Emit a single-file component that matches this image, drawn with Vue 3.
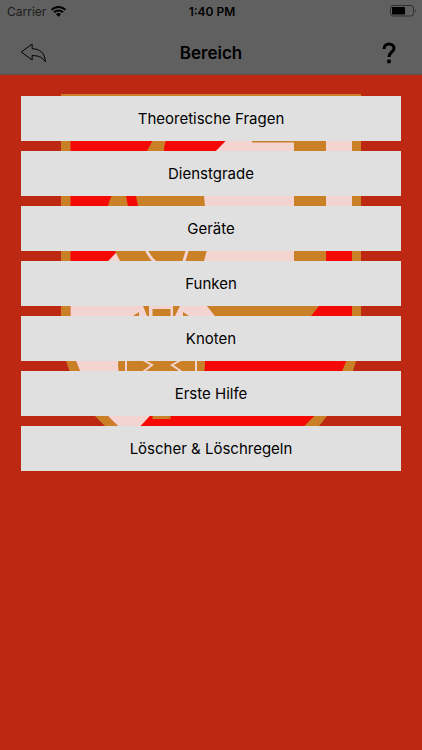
<template>
  <div class="screen">
    <header class="top">
      <div class="status-bar">
        <div class="carrier">
          <span>Carrier</span>
          <svg class="wifi" viewBox="0 0 15 11" aria-hidden="true">
            <path d="M0.6 3.8 A9.8 9.8 0 0 1 14.4 3.8" />
            <path d="M3 6.3 A6.4 6.4 0 0 1 12 6.3" />
            <path class="dot" d="M7.5 10.8 L5 8.2 A3.6 3.6 0 0 1 10 8.2 Z" />
          </svg>
        </div>
        <span class="time">1:40 PM</span>
        <svg class="battery" viewBox="0 0 27 12" aria-hidden="true">
          <rect class="shell" x="0.5" y="0.5" width="23" height="10.5" rx="2.5" />
          <rect x="2" y="2" width="13" height="7.5" rx="0.8" />
          <path class="tip" d="M25 3.8 Q26.6 5.8 25 7.8 Z" />
        </svg>
      </div>
      <nav class="nav-bar">
        <button class="nav-btn" type="button" aria-label="Zurück">
          <svg class="back-icon" viewBox="0 0 26 20" aria-hidden="true">
            <path d="M0.8 9 L11.6 1 V5.8 C19 5.6 24.6 10 24.8 18.8 C22 14.4 18 12.4 11.6 12.6 V17 Z" />
          </svg>
        </button>
        <h1 class="title">Bereich</h1>
        <button class="nav-btn right" type="button" aria-label="Hilfe">
          <svg class="help-icon" viewBox="0 0 14 22" aria-hidden="true">
            <path d="M2 7 C2 3.6 4 2 7 2 C10 2 12 3.8 12 6.3 C12 9.8 7 10 7 15" />
            <rect x="5.2" y="17.6" width="3.6" height="3.6" rx="0.8" />
          </svg>
        </button>
      </nav>
    </header>

    <main class="content">
      <!-- Wappen im Hintergrund -->
      <svg class="crest" viewBox="61 94 300 360" aria-hidden="true">
        <defs>
          <clipPath id="shield">
            <path d="M70.500 104 H352 V325 Q352 345 346 361 L342 371 Q334 395 314 416 L304 426 Q290 438 272 446 H150 Q132 438 118 426 L108 416 Q88 395 80 371 L76 361 Q70.500 345 70.500 325 Z" />
          </clipPath>
        </defs>
        <path class="gold" d="M61 94 H361 V325 Q361 345 356 361 L353 371 Q344 397 327 416 L319 426 Q302 442 275 454 H147 Q120 442 105 426 L95 416 Q78 397 69.500 371 L66 361 Q61 345 61 325 Z" />
        <g clip-path="url(#shield)">
          <rect class="red" x="61" y="94" width="300" height="360" />
          <path class="pink" d="M262 104 H352 V224 L150 416 L118 450 H61 V309 Z" />
          <path class="red" d="M352 224 V454 H115 L150 416 L205 361 L319 250 Z" />
          <rect class="gold" x="294" y="141" width="32" height="120" />
          <rect class="gold" x="252" y="139" width="44" height="3.500" />
          <path class="gold" d="M207 306 L215 316 H311 L319 306 L326 296 V261 H294 V290 H200 Z" />
          <!-- Helm -->
          <path class="gold" d="M158 132 Q152 141 147 151 Q112 186 108 206 Q108 238 115 251 L120 261 L137 282 H188 L204 261 L207 250 Q210 230 205 206 L204 196 L190 160 L164 151 Q164 145 166 141 L170 132 Z" />
          <path class="red" d="M166 141 L164 151 L170 168 L204 190 L215 151 L225 141 Z" />
          <path class="red" d="M126 196 H136 L138 206 L139 218 H130 L128 206 Z" />
          <path class="line thick" d="M146 249 Q149 257 156 263" />
          <path class="line thick" d="M188 248 L183 264" />
          <!-- Zahnrad und Beile -->
          <circle class="gold" cx="161.500" cy="365" r="43.500" />
          <path class="pink" d="M100 300 H202 L215 316 L192 332 H132 L117 348 H100 Z" />
          <path class="gold" d="M207 306 L215 316 H230 V306 Z" />
          <path class="gold" d="M143 306 H149 V316 H147 Z M173 306 H180 L175 316 H173 Z M133 316 L139 312 V316 Z M183 316 V312 L189 316 Z" />
          <rect class="gold" x="152.500" y="309" width="18" height="110" />
          <path class="line" d="M126 358 V374 M196 358 V374 M143 360 L152 365 L143 372 M181 360 L172 365 L182 372" />
        </g>
      </svg>

      <ul class="menu">
        <li v-for="item in items" :key="item">
          <button class="menu-btn" type="button">{{ item }}</button>
        </li>
      </ul>
    </main>
  </div>
</template>

<script setup>
const items = [
  'Theoretische Fragen',
  'Dienstgrade',
  'Geräte',
  'Funken',
  'Knoten',
  'Erste Hilfe',
  'Löscher & Löschregeln'
]
</script>

<style>
body {
  margin: 0;
  background-color: #bd2813;
}
</style>

<style scoped>
.screen {
  min-height: 100vh;
  background-color: #bd2813;
  color: #000;
  font-family: Inter, "Liberation Sans", sans-serif;
}

.top {
  display: flex;
  flex-direction: column;
  gap: 10px;
  background-color: #606060;
  border-bottom: 1px solid #6a5049;
}

.status-bar {
  display: grid;
  grid-template-columns: 1fr auto 1fr;
  align-items: center;
  height: 22px;
  padding: 0 5px 0 7px;
  font-size: 12px;
}

.carrier {
  display: flex;
  align-items: center;
  gap: 5px;
  color: #1c1c1c;
}

.wifi {
  width: 15px;
  height: 11px;
  fill: none;
  stroke: #000;
  stroke-width: 2;
}

.wifi .dot {
  fill: #000;
  stroke: none;
}

.time {
  font-weight: 600;
}

.battery {
  justify-self: end;
  width: 27px;
  height: 12px;
}

.battery .shell {
  fill: none;
  stroke: #303030;
}

.battery .tip {
  fill: #303030;
}

.nav-bar {
  display: grid;
  grid-template-columns: 1fr auto 1fr;
  align-items: center;
  height: 42px;
  padding: 0 20px;
}

.nav-btn {
  display: flex;
  padding: 0;
  border: none;
  background: none;
  cursor: pointer;
}

.nav-btn.right {
  justify-self: end;
  padding-right: 6px;
}

.back-icon {
  width: 27px;
  height: 20px;
  fill: none;
  stroke: #000;
  stroke-width: 1;
  stroke-linejoin: round;
}

.help-icon {
  width: 14px;
  height: 22px;
}

.help-icon path {
  fill: none;
  stroke: #000;
  stroke-width: 3;
}

.title {
  margin: 0;
  font-size: 17px;
  font-weight: 600;
}

.content {
  position: relative;
  padding: 21px;
}

.crest {
  position: absolute;
  top: 19px;
  left: 50%;
  width: 300px;
  height: 360px;
  transform: translateX(-50%);
}

.gold { fill: #c98027; }
.red { fill: #f50905; }
.pink { fill: #f3d4d0; }

.line {
  fill: none;
  stroke: #f3d4d0;
  stroke-width: 2;
}

.line.thick {
  stroke-width: 3;
}

.menu {
  position: relative;
  display: flex;
  flex-direction: column;
  gap: 10px;
  margin: 0;
  padding: 0;
  list-style: none;
}

.menu-btn {
  display: block;
  width: 100%;
  height: 45px;
  padding: 0;
  border: none;
  background-color: #e0e0e0;
  color: #000;
  font-family: inherit;
  font-size: 15px;
  cursor: pointer;
}
</style>
